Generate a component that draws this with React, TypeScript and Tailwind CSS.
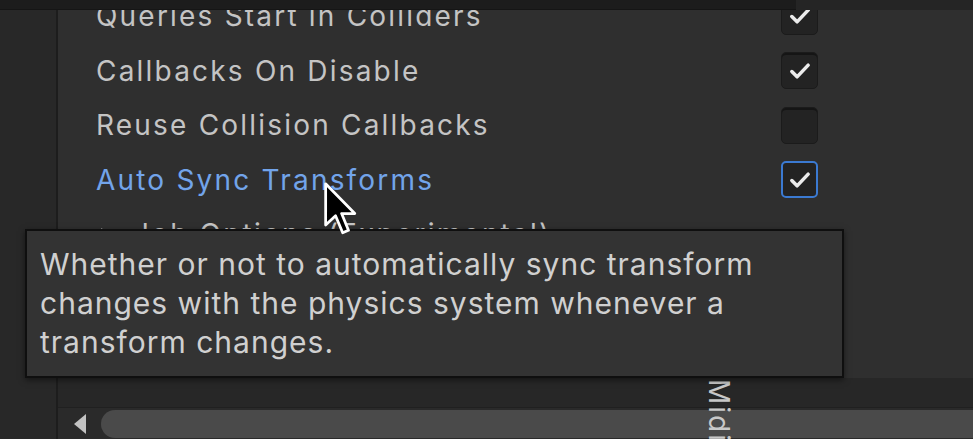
const rows = [
  { label: "Queries Start in Colliders", checked: true },
  { label: "Callbacks On Disable", checked: true },
  { label: "Reuse Collision Callbacks", checked: false },
  { label: "Auto Sync Transforms", checked: true, active: true },
];

const Check = ({ checked, active }: { checked: boolean; active?: boolean }) => (
  <div
    className={
      active
        ? "w-[37px] h-[37px] rounded-[5px] bg-[#232323] border-2 border-[#3b7ad2] flex items-center justify-center"
        : "w-[37px] h-[37px] rounded-[5px] bg-[#232323] border border-[#1b1b1b] shadow-[inset_0_2px_0_#151515] flex items-center justify-center"
    }
  >
    {checked && (
      <svg width="28" height="28" viewBox="0 0 24 24">
        <polyline
          points="5,12.5 9.5,17 19,7"
          fill="none"
          stroke="#ececec"
          strokeWidth="3"
          strokeLinecap="round"
          strokeLinejoin="round"
        />
      </svg>
    )}
  </div>
);

export default function App() {
  return (
    <div className="relative w-[973px] h-[439px] overflow-hidden bg-[#2f2f2f] font-['Inter',sans-serif] flex flex-col">
      {/* top strip */}
      <div className="h-[10px] flex shrink-0">
        <div className="w-[796px] bg-[#1c1c1c] border-b border-[#151515]" />
        <div className="flex-1 bg-[#252525]" />
      </div>

      <div className="flex flex-1 min-h-0">
        <div className="w-[58px] bg-[#282828] border-r-2 border-[#1d1d1d] shrink-0" />
        <div className="flex-1 flex flex-col min-w-0">
          <div className="flex-1 overflow-hidden">
            <div className="-mt-[21px]">
              {rows.map((r) => (
                <div
                  key={r.label}
                  className="h-[54.5px] flex items-center justify-between pl-[38px] pr-[155px]"
                >
                  <span
                    className={
                      r.active
                        ? "text-[28px] tracking-[2.2px] text-[#72a4ea] leading-none"
                        : "text-[28px] tracking-[2.2px] text-[#c4c4c4] leading-none"
                    }
                  >
                    {r.label}
                  </span>
                  <Check checked={r.checked} active={r.active} />
                </div>
              ))}
              <div className="h-[54.5px] flex items-center pl-[43px] gap-[20px]">
                <svg width="12" height="13" viewBox="0 0 12 13">
                  <polygon points="0,0 12,6.5 0,13" fill="#9a9a9a" />
                </svg>
                <span className="text-[28px] tracking-[2.2px] text-[#c4c4c4] leading-none">
                  Job Options (Experimental)
                </span>
              </div>
            </div>
          </div>
          <div className="h-[29px] bg-[#272727] shrink-0" />
          {/* scrollbar */}
          <div className="h-[32px] bg-[#2a2a2a] border-t border-[#202020] flex items-center shrink-0">
            <div className="w-[43px] flex justify-end pr-[15px]">
              <svg width="12" height="20" viewBox="0 0 12 20">
                <polygon points="12,0 12,20 0,10" fill="#c2c2c2" />
              </svg>
            </div>
            <div className="flex-1 h-[28px] bg-[#4a4a4a] rounded-l-full" />
          </div>
        </div>
      </div>

      {/* Midi vertical label */}
      <div className="absolute left-[705px] top-[379px] text-[28px] tracking-[2px] text-[#c8c8c8] leading-none [writing-mode:vertical-rl]">
        Midi
      </div>

      {/* tooltip */}
      <div className="absolute left-[25px] top-[229px] w-[819px] h-[149px] bg-[#333333] border-2 border-[#0f0f0f] shadow-[0_2px_6px_rgba(0,0,0,0.5)] pl-[13px] pt-[14px]">
        <p className="text-[30px] tracking-[1px] leading-[39px] text-[#d0d0d0] w-[770px]">
          Whether or not to automatically sync transform changes with the physics system whenever a transform changes.
        </p>
      </div>

      {/* cursor */}
      <svg
        className="absolute left-[324px] top-[182px]"
        width="33"
        height="54"
        viewBox="0 0 12 19.5"
      >
        <path
          d="M0.6 0.6 L0.6 15.6 L4.2 12.2 L6.8 18.4 L8.9 17.5 L6.4 11.4 L11.2 11.4 Z"
          fill="#000"
          stroke="#fff"
          strokeWidth="1"
          strokeLinejoin="round"
        />
      </svg>
    </div>
  );
}
